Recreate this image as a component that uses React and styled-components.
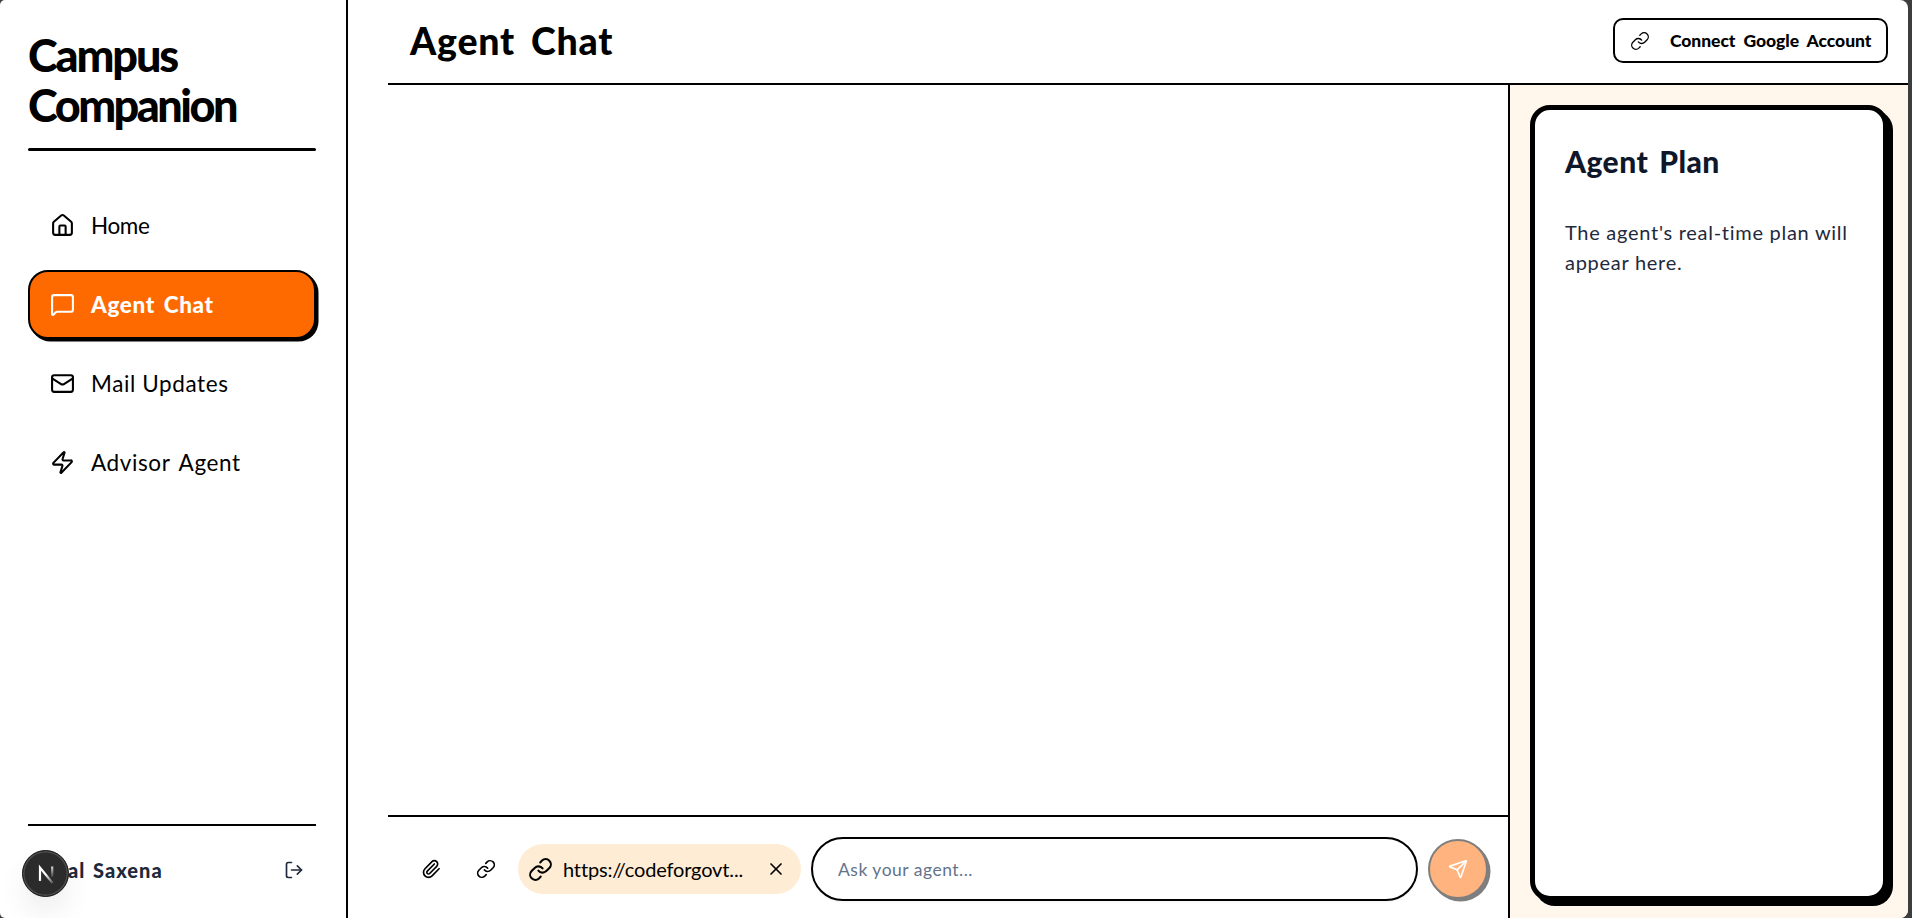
import React from "react";
import styled, { createGlobalStyle, css } from "styled-components";
import { House, MessageSquare, Mail, Zap, LogOut, Paperclip, Link, X, Send } from "lucide-react";

const GlobalStyle = createGlobalStyle`
  *, *::before, *::after { box-sizing: border-box; }
  body {
    margin: 0;
    background: #3c3d3d;
    font-family: Lato, "Open Sans", sans-serif;
    color: #000;
    overflow: hidden;
  }
  h1, h2, p { margin: 0; }
  button, input { font-family: inherit; color: inherit; margin: 0; padding: 0; border: 0; background: none; }
  svg { display: block; flex: none; }
`;

const tracking = css`
  letter-spacing: ${(p) => p.$track || 0}px;
  word-spacing: ${(p) => p.$gap || 0}px;
`;

const Shell = styled.div`
  display: flex;
  width: calc(100vw - 4px);
  height: 100vh;
  background: #fff;
  border-radius: 5px 8px 8px 5px;
  overflow: hidden;
`;

const Sidebar = styled.aside`
  display: flex;
  flex-direction: column;
  width: 348px;
  flex: none;
  padding: 30px 30px 0 28px;
  border-right: 2px solid #000;
`;

const Brand = styled.h1`
  display: flex;
  flex-direction: column;
  height: 118px;
  font-size: 45px;
  font-weight: 900;
  line-height: 50px;
`;

const BrandLine = styled.span`
  ${tracking}
`;

const BrandRule = styled.div`
  width: 288px;
  height: 3px;
  border-radius: 2px;
  background: #000;
`;

const Nav = styled.nav`
  display: flex;
  flex-direction: column;
  gap: 10px;
  width: 288px;
  margin-top: 40px;
`;

const NavItem = styled.a`
  display: flex;
  align-items: center;
  gap: 16px;
  height: 69px;
  padding: 0 20px;
  border: 2px solid transparent;
  border-radius: 20px;
  font-size: 22.5px;
  ${tracking}
  ${(p) =>
    p.$active &&
    css`
      border-color: #000;
      background: #ff6a00;
      color: #fff;
      font-weight: 900;
      box-shadow: 2.5px 2.5px 0 #000;
    `}
`;

const Account = styled.div`
  display: flex;
  align-items: center;
  justify-content: space-between;
  width: 288px;
  height: 94px;
  margin-top: auto;
  padding: 0 12px 4px 40px;
  border-top: 2px solid #000;
  color: #1e293b;
`;

const UserName = styled.span`
  font-size: 20px;
  font-weight: 900;
  ${tracking}
`;

const Main = styled.main`
  display: flex;
  flex-direction: column;
  flex: 1;
  min-width: 0;
  margin-left: 40px;
`;

const Header = styled.header`
  display: flex;
  align-items: center;
  justify-content: space-between;
  height: 85px;
  flex: none;
  padding: 0 20px 2px 22px;
  border-bottom: 2px solid #000;
`;

const PageTitle = styled.h1`
  padding-top: 1px;
  font-size: 37.5px;
  font-weight: 900;
  line-height: 44px;
  ${tracking}
`;

const ConnectButton = styled.button`
  display: flex;
  align-items: center;
  gap: 20px;
  width: 275px;
  height: 45px;
  padding: 0 0 0 15px;
  border: 2px solid #000;
  border-radius: 10px;
  font-size: 17.5px;
  font-weight: 900;
  white-space: nowrap;
  ${tracking}
`;

const Body = styled.div`
  display: flex;
  flex: 1;
  min-height: 0;
`;

const Chat = styled.section`
  display: flex;
  flex-direction: column;
  flex: 1;
  min-width: 0;
`;

const Messages = styled.div`
  flex: 1;
`;

const Composer = styled.div`
  display: flex;
  align-items: center;
  gap: 10px;
  height: 103px;
  padding: 3px 20px 0;
  border-top: 2px solid #000;
`;

const IconButton = styled.button`
  display: flex;
  align-items: center;
  justify-content: center;
  width: 45px;
  height: 45px;
`;

const LinkChip = styled.div`
  display: flex;
  align-items: center;
  width: 283px;
  height: 50px;
  padding: 0 15px 0 10px;
  border-radius: 25px;
  background: #ffecd4;
`;

const ChipText = styled.span`
  flex: 1;
  margin-left: 10px;
  font-size: 20px;
  white-space: nowrap;
  ${tracking}
`;

const Prompt = styled.input`
  flex: 1;
  min-width: 0;
  height: 64px;
  padding: 0 25px;
  border: 2px solid #000;
  border-radius: 32px;
  background: #fff;
  font-size: 17.5px;
  box-shadow: 0 1px 3px rgba(0, 0, 0, 0.06);
  outline: none;
  ${tracking}
  &::placeholder { color: #64748b; opacity: 1; }
`;

const SendButton = styled.button`
  display: flex;
  align-items: center;
  justify-content: center;
  width: 60px;
  height: 60px;
  flex: none;
  border: 2px solid #000;
  border-radius: 50%;
  background: #ff6a00;
  color: #fff;
  box-shadow: 2.5px 2.5px 0 #000;
  opacity: 0.5;
`;

const PlanPanel = styled.aside`
  width: 400px;
  flex: none;
  padding: 20px 20px 17px;
  border-left: 2px solid #000;
  background: #fff6ec;
`;

const PlanCard = styled.div`
  width: 358px;
  height: 100%;
  padding: 30px;
  border: 5px solid #000;
  border-radius: 20px;
  background: #fff;
  box-shadow: 5px 5px 0 #000;
`;

const PlanTitle = styled.h2`
  margin-bottom: 35px;
  font-size: 30px;
  font-weight: 900;
  line-height: 42px;
  color: #0f172a;
  ${tracking}
`;

const PlanText = styled.p`
  width: 290px;
  font-size: 20px;
  line-height: 30px;
  color: #1e293b;
  ${tracking}
`;

const DevBadge = styled.div`
  position: fixed;
  left: 22px;
  bottom: 21px;
  display: flex;
  align-items: center;
  justify-content: center;
  width: 47px;
  height: 47px;
  border: 1px solid #171717;
  border-radius: 50%;
  background: #2b2b2b;
  box-shadow: inset 0 0 0 1.5px #4c4c4c, 0 16px 32px -6px rgba(0, 0, 0, 0.12);
`;

function NextMark() {
  return (
    <svg width="18" height="20" viewBox="0 0 18 20" fill="none" strokeWidth="2.2">
      <defs>
        <linearGradient id="diagonal" gradientUnits="userSpaceOnUse" x1="9" y1="10" x2="16" y2="19">
          <stop stopColor="#fff" />
          <stop offset="1" stopColor="#fff" stopOpacity="0.2" />
        </linearGradient>
        <linearGradient id="stem" gradientUnits="userSpaceOnUse" x1="15" y1="2" x2="15" y2="13">
          <stop stopColor="#fff" stopOpacity="0.85" />
          <stop offset="1" stopColor="#fff" stopOpacity="0.1" />
        </linearGradient>
      </defs>
      <path d="M3 17V3.5L15.5 19" stroke="url(#diagonal)" />
      <path d="M15.2 2.5V13" stroke="url(#stem)" />
    </svg>
  );
}

const links = [
  { label: "Home", icon: House, track: -0.4 },
  { label: "Agent Chat", icon: MessageSquare, track: 0.65, gap: 2.8, active: true },
  { label: "Mail Updates", icon: Mail, track: 0.6, gap: 0 },
  { label: "Advisor Agent", icon: Zap, track: 0.6, gap: 3 },
];

export default function App() {
  return (
    <>
      <GlobalStyle />
      <Shell>
        <Sidebar>
          <Brand>
            <BrandLine $track={-2.1}>Campus</BrandLine>
            <BrandLine $track={-2.5}>Companion</BrandLine>
          </Brand>
          <BrandRule />
          <Nav>
            {links.map(({ label, icon: Icon, track, gap, active }) => (
              <NavItem key={label} $track={track} $gap={gap} $active={active}>
                <Icon size={25} />
                {label}
              </NavItem>
            ))}
          </Nav>
          <Account>
            <UserName $track={1} $gap={2}>al Saxena</UserName>
            <LogOut size={20} />
          </Account>
        </Sidebar>
        <Main>
          <Header>
            <PageTitle $track={0.75} $gap={6.5}>Agent Chat</PageTitle>
            <ConnectButton $track={-0.05} $gap={4}>
              <Link size={20} strokeWidth={1.6} />
              Connect Google Account
            </ConnectButton>
          </Header>
          <Body>
            <Chat>
              <Messages />
              <Composer>
                <IconButton><Paperclip size={20} /></IconButton>
                <IconButton><Link size={20} /></IconButton>
                <LinkChip>
                  <Link size={25} />
                  <ChipText $track={-0.15}>https://codeforgovt...</ChipText>
                  <X size={20} />
                </LinkChip>
                <Prompt placeholder="Ask your agent..." $track={0.5} />
                <SendButton><Send size={20} /></SendButton>
              </Composer>
            </Chat>
            <PlanPanel>
              <PlanCard>
                <PlanTitle $track={0.45} $gap={3.5}>Agent Plan</PlanTitle>
                <PlanText $track={0.72}>The agent's real-time plan will appear here.</PlanText>
              </PlanCard>
            </PlanPanel>
          </Body>
        </Main>
      </Shell>
      <DevBadge><NextMark /></DevBadge>
    </>
  );
}
